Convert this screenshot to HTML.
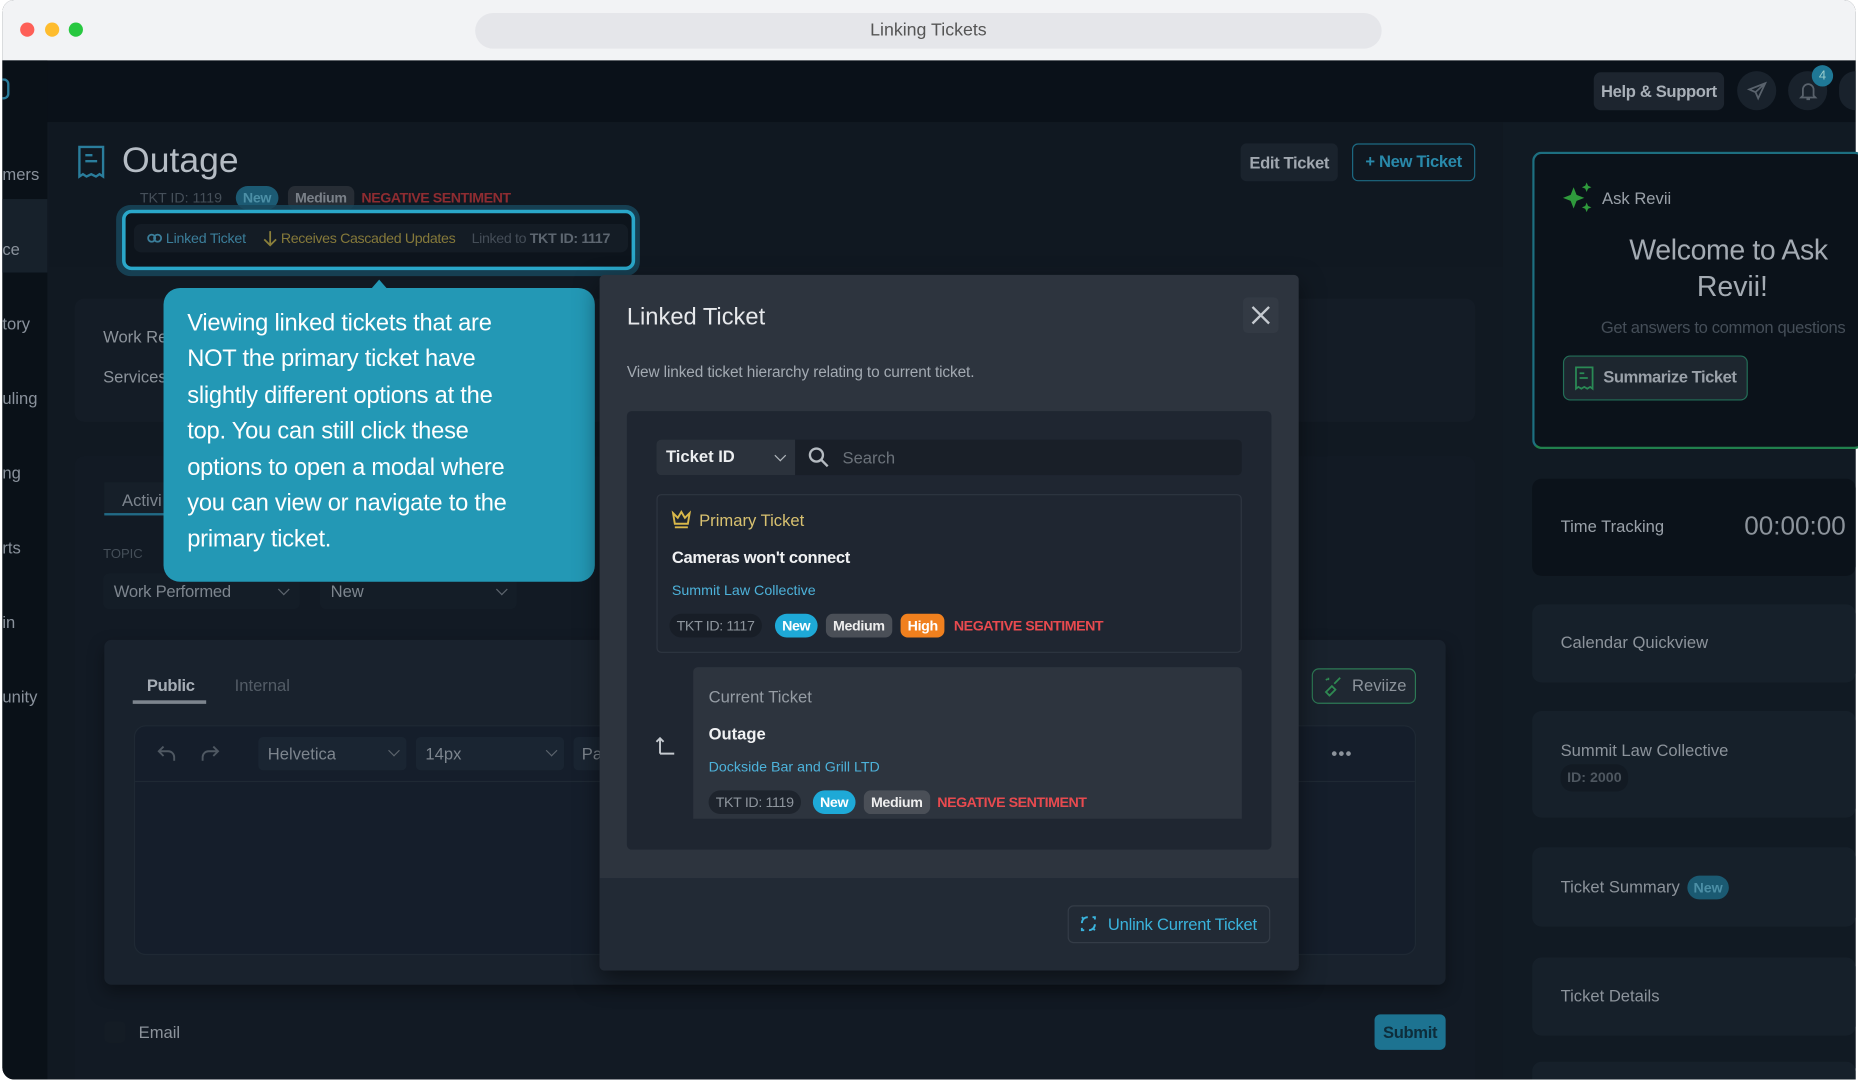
<!DOCTYPE html>
<html><head><meta charset="utf-8">
<style>
*{margin:0;padding:0;box-sizing:border-box}
html,body{width:1858px;height:1080px;overflow:hidden;background:#fff}
body{font-family:"Liberation Sans",sans-serif}
#s{position:absolute;left:0;top:0;width:1568px;height:912px;transform:scale(1.18495);transform-origin:0 0;background:#fff}
.a{position:absolute;white-space:nowrap}
.t{line-height:1}
.pill{position:absolute;border-radius:6px;font-size:12px;line-height:20px;padding:0 6px;font-weight:bold;letter-spacing:-0.3px}
.ng{letter-spacing:-0.4px}
.chev{position:absolute;width:7px;height:7px;border-right:1.5px solid #5c646d;border-bottom:1.5px solid #5c646d;transform:rotate(45deg)}
</style></head><body>
<div id="s">
<div class="a" style="left:2px;top:0;width:1564px;height:911px;border-radius:10px;overflow:hidden;background:#0d141d">
 <div class="a" style="left:0;top:0;width:1564px;height:51px;background:#f2f3f5"></div>
</div>
<div class="a" style="left:17px;top:19px;width:12px;height:12px;border-radius:6px;background:#fe5f57"></div>
<div class="a" style="left:38px;top:19px;width:12px;height:12px;border-radius:6px;background:#febc2e"></div>
<div class="a" style="left:58px;top:19px;width:12px;height:12px;border-radius:6px;background:#28c840"></div>
<div class="a" style="left:401px;top:11px;width:765px;height:30px;border-radius:15px;background:#e5e6ea;text-align:center;line-height:30px;font-size:15px;color:#555">Linking Tickets</div>

<div class="a" style="left:2px;top:51px;width:38px;height:860px;background:#0a1118;border-bottom-left-radius:10px"></div>
<div class="a" style="left:2px;top:168px;width:38px;height:62px;background:#17212b"></div>
<div class="a" style="left:2px;top:66px;width:6px;height:18px;border:2px solid #2a7d9c;border-left:0;border-radius:0 5px 5px 0"></div>
<div class="a" style="left:2px;top:139px;font-size:14px;color:#8a929c">mers</div>
<div class="a" style="left:2px;top:202px;font-size:14px;color:#8a929c">ce</div>
<div class="a" style="left:2px;top:265px;font-size:14px;color:#8a929c">tory</div>
<div class="a" style="left:2px;top:328px;font-size:14px;color:#8a929c">uling</div>
<div class="a" style="left:2px;top:391px;font-size:14px;color:#8a929c">ng</div>
<div class="a" style="left:2px;top:454px;font-size:14px;color:#8a929c">rts</div>
<div class="a" style="left:2px;top:517px;font-size:14px;color:#8a929c">in</div>
<div class="a" style="left:2px;top:580px;font-size:14px;color:#8a929c">unity</div>

<div class="a" style="left:40px;top:51px;width:1526px;height:52px;background:#0a1119"></div>
<div class="a" style="left:1345px;top:61px;width:110px;height:32px;border-radius:6px;background:#1d252f;color:#a9b0b8;font-size:14px;font-weight:bold;line-height:32px;text-align:center;letter-spacing:-0.3px">Help &amp; Support</div>
<div class="a" style="left:1466px;top:60px;width:33px;height:33px;border-radius:17px;background:#19222c"></div>
<svg class="a" style="left:1474px;top:68px" width="18" height="18" viewBox="0 0 24 24" fill="none" stroke="#59626c" stroke-width="2"><path d="M21 3L3 10l7 3 3 7z M10 13l11-10"/></svg>
<div class="a" style="left:1509px;top:60px;width:33px;height:33px;border-radius:17px;background:#19222c"></div>
<svg class="a" style="left:1517px;top:68px" width="18" height="18" viewBox="0 0 24 24" fill="none" stroke="#59626c" stroke-width="2"><path d="M6 17V10a6 6 0 0112 0v7l2 2H4z M10 21h4"/></svg>
<div class="a" style="left:1529px;top:55px;width:18px;height:18px;border-radius:9px;background:#1f7896;color:#9cc;font-size:11px;line-height:18px;text-align:center">4</div>
<div class="a" style="left:1552px;top:60px;width:14px;height:33px;border-radius:17px 0 0 17px;background:#19222c"></div>

<div class="a" style="left:40px;top:103px;width:1228px;height:808px;background:#111922"></div>
<div class="a" style="left:1268px;top:103px;width:298px;height:808px;background:#111a23"></div>
<div class="a" style="left:42px;top:103px;width:1226px;height:122px;background:#101821"></div>
<svg class="a" style="left:64px;top:122px" width="26" height="30" viewBox="0 0 26 30" fill="none" stroke="#2a7d9c" stroke-width="2"><path d="M3 2h20v25l-3-2-3 2-4-2-4 2-3-2-3 2z M8 9h6 M8 14h10"/></svg>
<div class="a t" style="left:103px;top:121px;font-size:30px;color:#b5bcc4">Outage</div>
<div class="a t" style="left:118px;top:161px;font-size:12px;color:#454f59">TKT ID: 1119</div>
<div class="pill" style="left:199px;top:157px;background:#1c5a73;color:#4c8fa6;border-radius:10px">New</div>
<div class="pill" style="left:243px;top:157px;background:#272d35;color:#7a8088">Medium</div>
<div class="a t ng" style="left:305px;top:161px;font-size:12px;color:#8e2c31;font-weight:bold">NEGATIVE SENTIMENT</div>
<div class="a" style="left:1047px;top:121px;width:82px;height:32px;border-radius:5px;background:#1a232d;color:#a1a8b0;font-size:14px;font-weight:bold;line-height:32px;text-align:center;letter-spacing:-0.3px">Edit Ticket</div>
<div class="a" style="left:1141px;top:121px;width:104px;height:32px;border-radius:5px;border:1.5px solid #1d6a83;color:#2989aa;font-size:14px;font-weight:bold;line-height:29px;text-align:center;letter-spacing:-0.3px">+ New Ticket</div>

<div class="a" style="left:98px;top:173px;width:442px;height:60px;border-radius:12px;background:#17465a;opacity:.85"></div>
<div class="a" style="left:103px;top:177px;width:433px;height:51px;border-radius:8px;border:3px solid #2aa7c9;background:#0d141c"></div>
<div class="a" style="left:113px;top:189px;width:417px;height:24px;border-radius:6px;background:#141c25"></div>
<svg class="a" style="left:124px;top:196px" width="13" height="10" viewBox="0 0 13 10" fill="none" stroke="#3b7e9a" stroke-width="1.5"><rect x="1" y="2" width="6" height="6" rx="3"/><rect x="6" y="2" width="6" height="6" rx="3"/></svg>
<div class="a t" style="left:140px;top:195px;font-size:12px;color:#3b7e9a;letter-spacing:-0.2px">Linked Ticket</div>
<svg class="a" style="left:222px;top:194px" width="12" height="14" viewBox="0 0 12 14" fill="none" stroke="#8a7f3a" stroke-width="1.5"><path d="M6 1v12 M1 8l5 5 5-5"/></svg>
<div class="a t" style="left:237px;top:195px;font-size:12px;color:#85793a;letter-spacing:-0.3px">Receives Cascaded Updates</div>
<div class="a t" style="left:398px;top:195px;font-size:12px;color:#444d57;letter-spacing:-0.3px">Linked to <b style="color:#5d6670">TKT ID: 1117</b></div>

<div class="a" style="left:63px;top:252px;width:1182px;height:104px;border-radius:8px;background:#141c26"></div>
<div class="a t" style="left:87px;top:277px;font-size:14px;color:#8c939b">Work Re</div>
<div class="a t" style="left:87px;top:311px;font-size:14px;color:#8c939b">Services</div>
<div class="a" style="left:63px;top:385px;width:1182px;height:526px;border-radius:8px 8px 0 0;background:#121a24"></div>
<div class="a" style="left:88px;top:407px;width:52px;height:28px;background:#161f29"></div>
<div class="a t" style="left:103px;top:415px;font-size:14px;color:#7d858e">Activi</div>
<div class="a" style="left:88px;top:433px;width:52px;height:2px;background:#226a86"></div>
<div class="a t" style="left:87px;top:463px;font-size:11px;color:#454f59">TOPIC</div>
<div class="a" style="left:87px;top:484px;width:166px;height:30px;border-radius:5px;background:#141d27"></div>
<div class="a t" style="left:96px;top:492px;font-size:14px;color:#7d858e;letter-spacing:-0.2px">Work Performed</div>
<div class="chev" style="left:236px;top:494px"></div>
<div class="a" style="left:270px;top:484px;width:166px;height:30px;border-radius:5px;background:#141d27"></div>
<div class="a t" style="left:279px;top:492px;font-size:14px;color:#7d858e">New</div>
<div class="chev" style="left:420px;top:494px"></div>

<div class="a" style="left:88px;top:540px;width:1132px;height:291px;border-radius:6px;background:#19222d;box-shadow:0 6px 14px rgba(0,0,0,.35)"></div>
<div class="a t" style="left:124px;top:571px;font-size:14px;font-weight:bold;color:#a6adb5;letter-spacing:-0.3px">Public</div>
<div class="a t" style="left:198px;top:571px;font-size:14px;color:#535c66">Internal</div>
<div class="a" style="left:112px;top:591px;width:62px;height:3px;background:#7d858e"></div>
<div class="a" style="left:1107px;top:564px;width:88px;height:30px;border-radius:6px;border:1.5px solid #2d7a55;background:#1f2832;color:#8c939b;font-size:14px;line-height:27px;padding-left:33px">Reviize</div>
<svg class="a" style="left:1116px;top:570px" width="18" height="18" viewBox="0 0 18 18" fill="none" stroke="#2f8a52" stroke-width="1.5"><path d="M3 14l5-5 3 3-5 5z M10 7l5-5 M3 3l1 1 M5 2v2"/></svg>
<div class="a" style="left:113px;top:612px;width:1082px;height:194px;border-radius:10px;border:1px solid #1f2934;background:#151e2b"></div>
<div class="a" style="left:114px;top:659px;width:1080px;height:1px;background:#1f2934"></div>
<svg class="a" style="left:132px;top:627px" width="18" height="18" viewBox="0 0 18 18" fill="none" stroke="#4f5862" stroke-width="1.6"><path d="M6 3L2 7l4 4 M2 7h8a5 5 0 015 5v3"/></svg>
<svg class="a" style="left:168px;top:627px" width="18" height="18" viewBox="0 0 18 18" fill="none" stroke="#4f5862" stroke-width="1.6"><path d="M12 3l4 4-4 4 M16 7H8a5 5 0 00-5 5v3"/></svg>
<div class="a" style="left:218px;top:622px;width:125px;height:28px;border-radius:4px;background:#1a2532"></div>
<div class="a t" style="left:226px;top:629px;font-size:14px;color:#7d858e">Helvetica</div>
<div class="chev" style="left:329px;top:630px"></div>
<div class="a" style="left:351px;top:622px;width:125px;height:28px;border-radius:4px;background:#1a2532"></div>
<div class="a t" style="left:359px;top:629px;font-size:14px;color:#7d858e">14px</div>
<div class="chev" style="left:462px;top:630px"></div>
<div class="a" style="left:484px;top:622px;width:22px;height:28px;border-radius:4px 0 0 4px;background:#1a2532"></div>
<div class="a t" style="left:491px;top:629px;font-size:14px;color:#7d858e">Pa</div>
<div class="a" style="left:1124px;top:634px;width:4px;height:4px;border-radius:2px;background:#8c939b;box-shadow:6px 0 #8c939b,12px 0 #8c939b"></div>
<div class="a" style="left:88px;top:862px;width:18px;height:18px;border-radius:4px;background:#141c25"></div>
<div class="a t" style="left:117px;top:864px;font-size:14px;color:#8c939b">Email</div>
<div class="a" style="left:1160px;top:856px;width:60px;height:30px;border-radius:5px;background:#1d7391;color:#0d2d3b;font-size:14px;font-weight:bold;line-height:30px;text-align:center;letter-spacing:-0.3px">Submit</div>

<div class="a" style="left:1293px;top:128px;width:280px;height:251px;border-radius:8px;border:2px solid #1d6f80;border-right:0;background:#0b121a;border-bottom-color:#21804d"></div>
<svg class="a" style="left:1318px;top:154px" width="28" height="26" viewBox="0 0 28 26" fill="#2f9a3c"><path d="M10 4l2.5 6.5L19 13l-6.5 2.5L10 22l-2.5-6.5L1 13l6.5-2.5z"/><path d="M21 0l1.2 2.8L25 4l-2.8 1.2L21 8l-1.2-2.8L17 4l2.8-1.2z"/><path d="M21 17l1.2 2.8L25 21l-2.8 1.2L21 25l-1.2-2.8L17 21l2.8-1.2z"/></svg>
<div class="a t" style="left:1352px;top:160px;font-size:14px;color:#9aa1a9">Ask Revii</div>
<div class="a t" style="left:1375px;top:200px;font-size:24px;color:#a4abb3;letter-spacing:-0.3px">Welcome to Ask</div>
<div class="a t" style="left:1432px;top:231px;font-size:24px;color:#a4abb3">Revii!</div>
<div class="a t" style="left:1351px;top:269px;font-size:14px;color:#454e58;letter-spacing:-0.3px">Get answers to common questions</div>
<div class="a" style="left:1319px;top:300px;width:156px;height:38px;border-radius:6px;border:1.5px solid #236f58;background:#1d262f;color:#9aa1a9;font-size:14px;font-weight:bold;line-height:35px;padding-left:33px;letter-spacing:-0.4px">Summarize Ticket</div>
<svg class="a" style="left:1328px;top:309px" width="18" height="21" viewBox="0 0 18 21" fill="none" stroke="#2a8a55" stroke-width="1.5"><path d="M2 1h14v18l-2-1.5-2.5 1.5-2.5-1.5-2.5 1.5L4 17.5 2 19z M5 6h4 M5 10h7"/></svg>
<div class="a" style="left:1293px;top:404px;width:273px;height:82px;border-radius:8px;background:#0b121a"></div>
<div class="a t" style="left:1317px;top:437px;font-size:14px;color:#9aa1a9">Time Tracking</div>
<div class="a t" style="left:1472px;top:433px;font-size:22px;color:#8c939b">00:00:00</div>
<div class="a" style="left:1293px;top:510px;width:273px;height:66px;border-radius:8px;background:#16202a"></div>
<div class="a t" style="left:1317px;top:535px;font-size:14px;color:#8c939b">Calendar Quickview</div>
<div class="a" style="left:1293px;top:600px;width:273px;height:90px;border-radius:8px;background:#16202a"></div>
<div class="a t" style="left:1317px;top:626px;font-size:14px;color:#8c939b">Summit Law Collective</div>
<div class="a" style="left:1317px;top:645px;width:57px;height:23px;border-radius:10px;background:#121a23;color:#4e5760;font-size:12px;font-weight:bold;line-height:23px;text-align:center">ID: 2000</div>
<div class="a" style="left:1293px;top:715px;width:273px;height:67px;border-radius:8px;background:#16202a"></div>
<div class="a t" style="left:1317px;top:741px;font-size:14px;color:#8c939b">Ticket Summary</div>
<div class="a" style="left:1424px;top:739px;width:35px;height:20px;border-radius:10px;background:#1b5a72;color:#4c8fa6;font-size:12px;font-weight:bold;line-height:20px;text-align:center">New</div>
<div class="a" style="left:1293px;top:808px;width:273px;height:66px;border-radius:8px;background:#16202a"></div>
<div class="a t" style="left:1317px;top:833px;font-size:14px;color:#8c939b">Ticket Details</div>
<div class="a" style="left:1293px;top:896px;width:273px;height:15px;border-radius:8px 8px 0 0;background:#16202a"></div>

<div class="a" style="left:313px;top:236px;width:0;height:0;border-left:7px solid transparent;border-right:7px solid transparent;border-bottom:8px solid #2398b5"></div>
<div class="a" style="left:138px;top:243px;width:364px;height:248px;border-radius:14px;background:#2398b5;color:#fff;font-size:20px;line-height:30.4px;padding:15px 0 0 20px;white-space:normal;letter-spacing:-0.2px">Viewing linked tickets that are<br>NOT the primary ticket have<br>slightly different options at the<br>top. You can still click these<br>options to open a modal where<br>you can view or navigate to the<br>primary ticket.</div>

<div class="a" style="left:506px;top:232px;width:590px;height:587px;border-radius:4px;background:#2d343e;box-shadow:0 8px 20px rgba(0,0,0,.5);overflow:hidden">
 <div class="a" style="left:0;top:509px;width:590px;height:78px;background:#222a35"></div>
</div>
<div class="a t" style="left:529px;top:258px;font-size:20px;color:#e6e8eb">Linked Ticket</div>
<div class="a" style="left:1049px;top:251px;width:30px;height:30px;border-radius:4px;background:#333a44"></div>
<svg class="a" style="left:1055px;top:257px" width="18" height="18" viewBox="0 0 18 18" stroke="#c5cad0" stroke-width="2"><path d="M2 2l14 14M16 2L2 16"/></svg>
<div class="a t" style="left:529px;top:307px;font-size:13px;color:#a3aab2;letter-spacing:-0.1px">View linked ticket hierarchy relating to current ticket.</div>
<div class="a" style="left:529px;top:347px;width:544px;height:370px;border-radius:4px;background:#1f2631"></div>
<div class="a" style="left:554px;top:371px;width:494px;height:30px;border-radius:4px;background:#191f28"></div>
<div class="a" style="left:554px;top:371px;width:117px;height:30px;border-radius:4px 0 0 4px;background:#2b323c"></div>
<div class="a t" style="left:562px;top:378px;font-size:14px;font-weight:bold;color:#eceef0">Ticket ID</div>
<div class="chev" style="left:655px;top:381px;border-color:#b0b6bc"></div>
<svg class="a" style="left:682px;top:377px" width="18" height="18" viewBox="0 0 18 18" fill="none" stroke="#b5bbc1" stroke-width="2"><circle cx="7" cy="7" r="5.5"/><path d="M11 11l5.5 5.5"/></svg>
<div class="a t" style="left:711px;top:379px;font-size:14px;color:#6b727a">Search</div>
<div class="a" style="left:554px;top:417px;width:494px;height:134px;border-radius:4px;border:1px solid #2f3641"></div>
<svg class="a" style="left:566px;top:430px" width="18" height="17" viewBox="0 0 18 17" fill="none" stroke="#d9b84a" stroke-width="1.6"><path d="M2 3l4 4 3-5 3 5 4-4-1.5 9h-11z M3.5 15h11"/></svg>
<div class="a t" style="left:590px;top:432px;font-size:14px;color:#d8c170">Primary Ticket</div>
<div class="a t" style="left:567px;top:463px;font-size:14px;font-weight:bold;color:#f0f1f3;letter-spacing:-0.3px">Cameras won't connect</div>
<div class="a t" style="left:567px;top:492px;font-size:12px;color:#4db2da">Summit Law Collective</div>
<div class="pill" style="left:565px;top:518px;background:#181e27;color:#8e959d;font-weight:normal;border-radius:10px">TKT ID: 1117</div>
<div class="pill" style="left:654px;top:518px;background:#1ea9d7;color:#fff;border-radius:10px">New</div>
<div class="pill" style="left:697px;top:518px;background:#4a4f57;color:#eee">Medium</div>
<div class="pill" style="left:760px;top:518px;background:#f0801e;color:#fff">High</div>
<div class="a t ng" style="left:805px;top:522px;font-size:12px;font-weight:bold;color:#e84a4f">NEGATIVE SENTIMENT</div>
<div class="a" style="left:585px;top:563px;width:463px;height:128px;border-radius:4px 4px 0 0;background:#2d343e"></div>
<svg class="a" style="left:553px;top:620px" width="18" height="18" viewBox="0 0 18 18" fill="none" stroke="#c5cad0" stroke-width="1.6"><path d="M4 16V3 M1 6l3-3 3 3 M4 16h12"/></svg>
<div class="a t" style="left:598px;top:581px;font-size:14px;color:#959ca4">Current Ticket</div>
<div class="a t" style="left:598px;top:612px;font-size:14px;font-weight:bold;color:#f0f1f3">Outage</div>
<div class="a t" style="left:598px;top:641px;font-size:12px;color:#4db2da">Dockside Bar and Grill LTD</div>
<div class="pill" style="left:598px;top:667px;background:#1e242d;color:#8e959d;font-weight:normal;border-radius:10px">TKT ID: 1119</div>
<div class="pill" style="left:686px;top:667px;background:#1ea9d7;color:#fff;border-radius:10px">New</div>
<div class="pill" style="left:729px;top:667px;background:#4a4f57;color:#eee">Medium</div>
<div class="a t ng" style="left:791px;top:671px;font-size:12px;font-weight:bold;color:#e84a4f">NEGATIVE SENTIMENT</div>
<div class="a" style="left:901px;top:764px;width:171px;height:32px;border-radius:5px;border:1px solid #343c47;color:#3ab3dc;font-size:14px;line-height:30px;padding-left:33px;letter-spacing:-0.2px">Unlink Current Ticket</div>
<svg class="a" style="left:910px;top:771px" width="17" height="17" viewBox="0 0 17 17" fill="none" stroke="#3ab3dc" stroke-width="1.6"><path d="M3 8a5 5 0 015-5 M14 9a5 5 0 01-5 5 M3 3l2 2 M12 12l2 2 M5 14H3v-2 M12 3h2v2"/></svg>
</div>
</body></html>
